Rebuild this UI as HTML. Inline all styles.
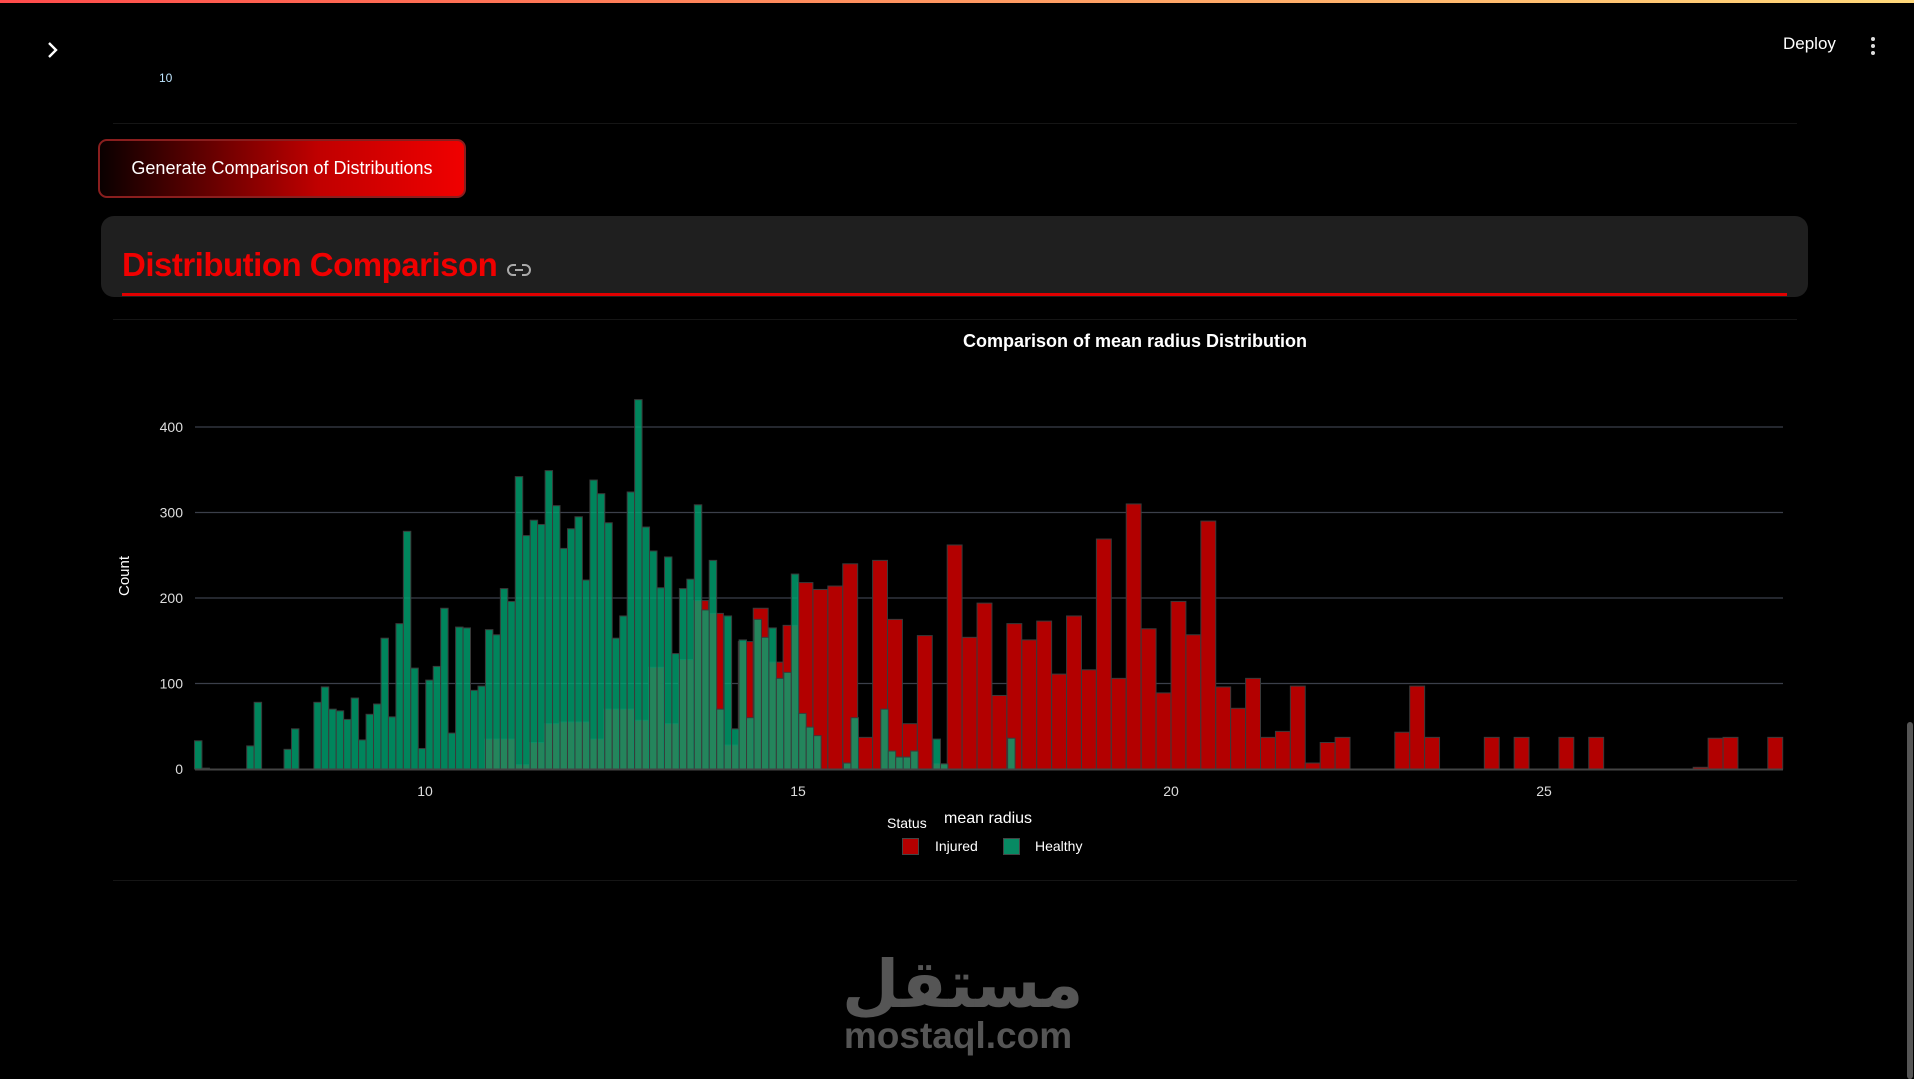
<!DOCTYPE html>
<html><head><meta charset="utf-8"><style>
html,body{margin:0;padding:0;background:#000;width:1914px;height:1079px;overflow:hidden;font-family:"Liberation Sans",sans-serif;color:#fff}
.top{position:absolute;left:0;top:0;width:1914px;height:3px;background:linear-gradient(90deg,#ff4b4b,#ff8a5c 40%,#ffd97a)}
.abs{position:absolute}
.hr{position:absolute;left:113px;width:1684px;height:1px;background:#151515}
.btn{position:absolute;left:98px;top:139px;width:364px;height:55px;border:2px solid #8a1e1e;border-radius:9px;background:linear-gradient(90deg,#0a0000,#c00000 60%,#f00000);font-size:18px;line-height:55px;text-align:center;color:#fff}
.card{position:absolute;left:101px;top:216px;width:1707px;height:81px;background:#1f1f1f;border-radius:13px}
.title{position:absolute;left:122px;top:246px;font-size:33px;font-weight:bold;color:#f00000;letter-spacing:-0.5px}
.uline{position:absolute;left:122px;top:293px;width:1665px;height:3px;background:#e00000}
</style></head><body>
<div class="top"></div>
<svg class="abs" style="left:45px;top:41px" width="16" height="18" viewBox="0 0 16 18"><path d="M4 2 L11 9 L4 16" stroke="#fff" stroke-width="2.4" fill="none"/></svg>
<div class="abs" style="left:1783px;top:34px;font-size:17px">Deploy</div>
<svg class="abs" style="left:1868px;top:36px" width="10" height="20"><circle cx="5" cy="3" r="2" fill="#ddd"/><circle cx="5" cy="10" r="2" fill="#ddd"/><circle cx="5" cy="17" r="2" fill="#ddd"/></svg>
<div class="abs" style="left:159px;top:71px;font-size:12px;color:#bfe6ff">10</div>
<div class="hr" style="top:123px"></div>
<div class="btn">Generate Comparison of Distributions</div>
<div class="card"></div>
<div class="title">Distribution Comparison</div>
<svg class="abs" style="left:507px;top:262px" width="24" height="16" viewBox="0 0 24 16"><path d="M9 3 H6 a5 5 0 0 0 0 10 H9 M15 3 H18 a5 5 0 0 1 0 10 H15" stroke="#aaa" stroke-width="2" fill="none"/><line x1="8" y1="8" x2="16" y2="8" stroke="#aaa" stroke-width="2"/></svg>
<div class="uline"></div>
<div class="hr" style="top:319px"></div>
<div class="abs" style="left:0;width:2270px;top:331px;text-align:center;font-size:18px;font-weight:bold">Comparison of mean radius Distribution</div>
<svg class="abs" id="ch" style="left:0;top:0" width="1914" height="880"></svg>
<div class="abs" style="left:116px;font-size:15px;transform:rotate(-90deg);transform-origin:left top;top:596px">Count</div>
<div class="abs" style="left:887px;top:815px;font-size:14px">Status</div>
<div class="abs" style="left:944px;top:810px;font-size:16px">mean radius</div>
<div class="abs" style="left:902px;top:838px;width:15px;height:15px;background:#b30000;border:1px solid #444"></div>
<div class="abs" style="left:935px;top:838px;font-size:14px">Injured</div>
<div class="abs" style="left:1003px;top:838px;width:15px;height:15px;background:#078a63;border:1px solid #444"></div>
<div class="abs" style="left:1035px;top:838px;font-size:14px">Healthy</div>
<div class="hr" style="top:880px"></div>
<div class="abs" style="left:842px;top:940px;width:232px;text-align:center;font-family:'DejaVu Sans',sans-serif;font-weight:bold;font-size:66px;color:#555;line-height:90px">مستقل</div>
<div class="abs" style="left:842px;top:1015px;width:232px;text-align:center;font-weight:bold;font-size:37px;color:#555">mostaql.com</div>
<div class="abs" style="left:1907px;top:722px;width:6px;height:357px;background:#555;border-radius:3px"></div>
<script>
var s='';
function X(v){return 425+(v-10)*74.6}
function Y(c){return 769-c*0.855}
for(var g=1;g<=4;g++){s+='<line x1="195" x2="1783" y1="'+Y(g*100)+'" y2="'+Y(g*100)+'" stroke="#3b3f4a" stroke-width="1.3"/>';
s+='<text x="183" y="'+(Y(g*100)+5)+'" fill="#ddd" font-size="14" text-anchor="end" font-family="Liberation Sans">'+(g*100)+'</text>'}
s+='<text x="183" y="774" fill="#ddd" font-size="14" text-anchor="end" font-family="Liberation Sans">0</text>';
[10,15,20,25].forEach(function(v){s+='<text x="'+X(v)+'" y="796" fill="#ddd" font-size="14" text-anchor="middle" font-family="Liberation Sans">'+v+'</text>'});
var red=[35,35,5,31,53,55,55,35,70,70,57,119,53,128,197,182,28,149,188,125,168,218,210,214,240,37,244,175,53,156,6,262,154,194,86,170,151,173,111,179,116,269,106,310,164,89,196,157,290,96,71,106,37,44,97,7,31,37,0,0,0,43,97,37,0,0,0,37,0,37,0,0,37,0,37,0,0,0,0,0,0,2,36,37,0,0,37];
for(var i=0;i<red.length;i++){if(!red[i])continue;var x=X(10.8+i*0.2);s+='<rect x="'+x+'" y="'+Y(red[i])+'" width="14.9" height="'+(red[i]*0.855)+'" fill="#b30000" stroke="#3a3a3a" stroke-width="1"/>'}
var gm={0:33,1:1,7:27,8:78,12:23,13:47,16:78,17:96,18:70,19:68,20:58,21:83,22:34,23:64,24:76,25:153,26:61,27:170,28:278,29:118,30:24,31:104,32:120,33:188,34:42,35:166,36:165,37:92,38:97,39:163,40:157,41:211,42:196,43:342,44:273,45:291,46:286,47:349,48:308,49:258,50:281,51:295,52:221,53:338,54:322,55:288,56:153,57:179,58:324,59:432,60:283,61:255,62:212,63:248,64:135,65:211,66:222,67:309,68:186,69:244,70:70,71:179,72:47,73:151,74:60,75:175,76:154,77:165,78:106,79:113,80:228,81:65,82:49,83:39,87:7,88:60,92:70,93:21,94:14,95:14,96:21,99:35,100:6,109:36};
for(var k in gm){var c=gm[k];var x=X(6.91+k*0.1);s+='<rect x="'+x+'" y="'+Y(c)+'" width="7.46" height="'+(c*0.855)+'" fill="#00a673" fill-opacity="0.8" stroke="#3a3a3a" stroke-width="1"/>'}
s+='<line x1="195" x2="1783" y1="769.5" y2="769.5" stroke="#444" stroke-width="2"/>';
document.getElementById('ch').innerHTML=s;
</script>
</body></html>
